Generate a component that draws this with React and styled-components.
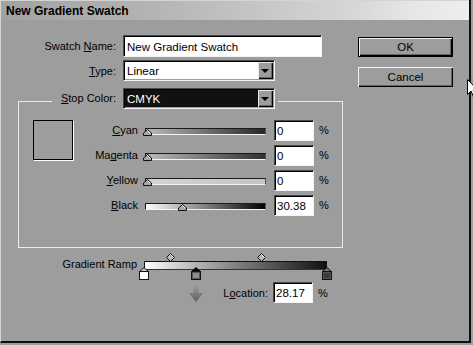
import React from "react";
import styled, { createGlobalStyle } from "styled-components";

const GlobalStyle = createGlobalStyle`
  html, body {
    margin: 0;
    padding: 0;
    background: #9d9d9d;
    overflow: hidden;
  }
  body {
    font-family: "Liberation Sans", Arial, sans-serif;
    font-size: 11px;
    color: #000;
  }
  u {
    text-decoration-skip-ink: none;
  }
`;

const channels = [
  { name: "Cyan", label: <><u>C</u>yan</>, value: "0", pct: 0, from: "#bcbcbc", to: "#262626" },
  { name: "Magenta", label: <>Ma<u>g</u>enta</>, value: "0", pct: 0, from: "#bcbcbc", to: "#303030" },
  { name: "Yellow", label: <><u>Y</u>ellow</>, value: "0", pct: 0, from: "#d4d4d4", to: "#c4c4c4" },
  { name: "Black", label: <><u>B</u>lack</>, value: "30.38", pct: 30.38, from: "#ffffff", to: "#000000" },
];

const stops = [
  { pos: 0, fill: "#ffffff", cap: "#c8c8c8" },
  { pos: 28.17, fill: "#8c8c8c", cap: "#000000" },
  { pos: 100, fill: "#3a3a3a", cap: "#777777" },
];

const RAMP_WIDTH = 183;
const SLIDE_WIDTH = 121;

function App() {
  const selected = stops[1];
  const midpoints = stops.slice(1).map((s, i) => (stops[i].pos + s.pos) / 2);

  return (
    <>
      <GlobalStyle />
      <Screen>
        <Dialog>
          <TitleBar>New Gradient Swatch</TitleBar>
          <Body>
            <Main>
              <FieldRow>
                <Label>Swatch <u>N</u>ame:</Label>
                <TextField readOnly value="New Gradient Swatch" $width={199} $height={22} />
              </FieldRow>
              <FieldRow>
                <Label><u>T</u>ype:</Label>
                <Select>
                  <SelectField>Linear</SelectField>
                  <DropButton />
                </Select>
              </FieldRow>

              <Group>
                <Legend>
                  <LegendLabel><u>S</u>top Color:</LegendLabel>
                  <Select>
                    <SelectField $dark>CMYK</SelectField>
                    <DropButton />
                  </Select>
                </Legend>
                <GroupContent>
                  <Swatch />
                  <SliderGrid>
                    {channels.map((c) => (
                      <React.Fragment key={c.name}>
                        <SliderLabel>{c.label}</SliderLabel>
                        <Track $from={c.from} $to={c.to}>
                          <Thumb style={{ left: `${-3 + (c.pct / 100) * 115}px` }}>
                            <svg width="9" height="7" viewBox="0 0 9 7">
                              <path d="M4.5 0.5 L8.5 4 L8.5 6.5 L0.5 6.5 L0.5 4 Z" fill="#a8a8a8" stroke="#111" />
                              <path d="M4.5 1.5 L7 4" stroke="#fff" />
                            </svg>
                          </Thumb>
                        </Track>
                        <NumField readOnly value={c.value} />
                        <Percent>%</Percent>
                      </React.Fragment>
                    ))}
                  </SliderGrid>
                </GroupContent>
              </Group>

              <RampRow>
                <RampLabel>Gradient Ramp</RampLabel>
                <Ramp>
                  {midpoints.map((m) => (
                    <Diamond key={m} style={{ left: `calc(${m}% - 4px)` }}>
                      <svg width="9" height="9" viewBox="0 0 9 9">
                        <path d="M4.5 0.5 L8.5 4.5 L4.5 8.5 L0.5 4.5 Z" fill="#b8b8b8" stroke="#111" />
                        <path d="M4.5 1.5 L7.5 4.5" stroke="#fff" />
                      </svg>
                    </Diamond>
                  ))}
                  <RampBar />
                  {stops.map((s) => (
                    <Stop key={s.pos} style={{ left: `calc(${s.pos}% - 5px)` }}>
                      <svg width="10" height="13" viewBox="0 0 10 13">
                        <path d="M5 0.5 L9.5 4.5 L0.5 4.5 Z" fill={s.cap} stroke="#111" />
                        <rect x="0.5" y="4.5" width="9" height="8" fill={s.fill} stroke="#111" />
                        <rect x="1.5" y="5.5" width="7" height="6" fill="none" stroke={s.pos === 0 ? "#fff" : "#555"} />
                      </svg>
                    </Stop>
                  ))}
                </Ramp>
              </RampRow>

              <LocationRow>
                <ArrowSlot>
                  <DownArrow
                    style={{ marginLeft: `${(selected.pos / 100) * RAMP_WIDTH - 7}px` }}
                    width="14"
                    height="16"
                    viewBox="0 0 14 16"
                  >
                    <defs>
                      <linearGradient id="arrowFade" x1="0" y1="0" x2="0" y2="1">
                        <stop offset="0" stopColor="#9a9a9a" />
                        <stop offset="1" stopColor="#5e5e5e" />
                      </linearGradient>
                    </defs>
                    <path d="M4.5 0 L9.5 0 L9.5 7 L14 7 L7 16 L0 7 L4.5 7 Z" fill="url(#arrowFade)" />
                  </DownArrow>
                  <LocationLabel>L<u>o</u>cation:</LocationLabel>
                </ArrowSlot>
                <NumField readOnly value="28.17" />
                <Percent>%</Percent>
              </LocationRow>
            </Main>

            <Buttons>
              <Button $primary>OK</Button>
              <Button>Cancel</Button>
            </Buttons>
          </Body>
        </Dialog>

        <Cursor width="12" height="19" viewBox="0 0 12 19">
          <path d="M0.5 0.5 L0.5 15.5 L4 12 L6.5 18 L8.5 17.2 L6 11.3 L11 11.3 Z" fill="#fff" stroke="#000" />
        </Cursor>
      </Screen>
    </>
  );
}

export default App;

const Screen = styled.div`
  position: relative;
  width: 473px;
  height: 345px;
  overflow: hidden;
`;

const Dialog = styled.div`
  width: 471px;
  height: 343px;
  box-sizing: border-box;
  background: #9d9d9d;
  border-left: 1px solid #d6d6d6;
  border-right: 2px solid #111;
  border-bottom: 2px solid #111;
  display: flex;
  flex-direction: column;
`;

const TitleBar = styled.div`
  height: 20px;
  flex: 0 0 20px;
  display: flex;
  align-items: center;
  padding-left: 5px;
  font-size: 12px;
  font-weight: bold;
  border-top: 1px solid #d4d4d4;
  box-sizing: border-box;
  background: linear-gradient(
    to right,
    #a2a2a2 0%,
    #b2b2b2 30%,
    #c6c6c6 55%,
    #d6d6d6 75%,
    #e6e6e6 88%,
    #eeeeee 100%
  );
`;

const Body = styled.div`
  display: flex;
  padding-top: 15px;
`;

const Main = styled.div`
  width: 357px;
  display: flex;
  flex-direction: column;
`;

const FieldRow = styled.div`
  display: grid;
  grid-template-columns: 115px auto;
  column-gap: 7px;
  align-items: center;
  margin-bottom: 3px;
`;

const Label = styled.label`
  text-align: right;
  white-space: nowrap;
`;

const sunken = `
  box-sizing: border-box;
  border: 1px solid;
  border-color: #4a4a4a #f4f4f4 #f4f4f4 #4a4a4a;
  box-shadow: inset 1px 1px 0 #000;
`;

const TextField = styled.input`
  ${sunken}
  width: ${(p) => p.$width}px;
  height: ${(p) => p.$height}px;
  background: #fff;
  font: inherit;
  font-size: 11.5px;
  padding: 1px 0 0 3px;
  outline: none;
`;

const NumField = styled.input`
  ${sunken}
  width: 40px;
  height: 21px;
  background: #fff;
  font: inherit;
  font-size: 11.5px;
  padding: 1px 0 0 2px;
  outline: none;
`;

const Select = styled.div`
  ${sunken}
  width: 152px;
  height: 21px;
  display: flex;
  padding: 1px 1px 1px 1px;
`;

const SelectField = styled.div`
  flex: 1;
  display: flex;
  align-items: center;
  padding-left: 2px;
  font-size: 11.5px;
  background: ${(p) => (p.$dark ? "#111" : "#fff")};
  color: ${(p) => (p.$dark ? "#fff" : "#000")};
`;

const DropButton = styled.div`
  width: 15px;
  background: #9d9d9d;
  box-shadow: inset 1px 1px 0 #e8e8e8, inset -1px -1px 0 #000, inset -2px -2px 0 #666;
  display: flex;
  align-items: center;
  justify-content: center;

  &::after {
    content: "";
    border-left: 4px solid transparent;
    border-right: 4px solid transparent;
    border-top: 4px solid #000;
    margin-left: -1px;
  }
`;

const Group = styled.fieldset`
  margin: 4px 0 0 17px;
  padding: 0 0 32px 0;
  width: 325px;
  min-inline-size: 0;
  box-sizing: border-box;
  border: 1px solid #ececec;
`;

const Legend = styled.legend`
  margin-left: 33px;
  padding: 0 3px 0 4px;
  height: 26px;
  display: flex;
  align-items: flex-start;
  gap: 7px;
`;

const LegendLabel = styled.span`
  width: 60px;
  text-align: right;
  line-height: 21px;
  white-space: nowrap;
`;

const GroupContent = styled.div`
  display: flex;
  align-items: flex-start;
  margin-top: 6px;
`;

const Swatch = styled.div`
  width: 40px;
  height: 40px;
  box-sizing: border-box;
  margin-left: 14px;
  border: 1px solid #000;
  box-shadow: 1px 1px 0 #fff;
  background: #9d9d9d;
`;

const SliderGrid = styled.div`
  display: grid;
  grid-template-columns: 71px ${SLIDE_WIDTH}px 48px auto;
  grid-auto-rows: 20px;
  row-gap: 5px;
  align-items: center;
  margin-left: 1px;

  & > input {
    margin-left: 8px;
  }
`;

const SliderLabel = styled.span`
  text-align: right;
  padding-right: 7px;
  white-space: nowrap;
`;

const Track = styled.div`
  position: relative;
  height: 7px;
  margin-top: 2px;
  box-sizing: border-box;
  border-top: 1px solid #1a1a1a;
  border-left: 1px solid #1a1a1a;
  border-bottom: 1px solid #f4f4f4;
  border-right: 1px solid #555;
  background: linear-gradient(to right, ${(p) => p.$from}, ${(p) => p.$to});
`;

const Thumb = styled.div`
  position: absolute;
  bottom: -2px;
  width: 9px;
  height: 7px;
  line-height: 0;
`;

const Percent = styled.span`
  padding-left: 5px;
`;

const RampRow = styled.div`
  display: grid;
  grid-template-columns: 143px ${RAMP_WIDTH}px;
  align-items: start;
  margin-top: 5px;
`;

const RampLabel = styled.span`
  text-align: right;
  padding-right: 7px;
  padding-top: 4px;
  line-height: 14px;
  white-space: nowrap;
`;

const Ramp = styled.div`
  position: relative;
  height: 28px;
  padding-top: 8px;
  box-sizing: border-box;
`;

const RampBar = styled.div`
  height: 9px;
  box-sizing: border-box;
  border: 1px solid #111;
  border-bottom-color: #333;
  background: linear-gradient(to right, #ffffff 0%, #b4b4b4 28.17%, #101010 100%);
`;

const Diamond = styled.div`
  position: absolute;
  top: 0;
  line-height: 0;
`;

const Stop = styled.div`
  position: absolute;
  top: 14px;
  line-height: 0;
`;

const LocationRow = styled.div`
  display: flex;
  align-items: center;
  margin: 1px 0 0 143px;
`;

const ArrowSlot = styled.div`
  width: 129px;
  display: flex;
  align-items: center;
`;

const DownArrow = styled.svg`
  flex: none;
  margin-top: 3px;
`;

const LocationLabel = styled.span`
  margin-left: auto;
  padding-right: 5px;
`;

const Buttons = styled.div`
  display: flex;
  flex-direction: column;
  gap: 10px;
  padding-top: 2px;
`;

const Button = styled.div`
  width: 95px;
  height: 20px;
  box-sizing: border-box;
  display: flex;
  align-items: center;
  justify-content: center;
  font-size: 11.5px;
  background: #9d9d9d;
  border: ${(p) => (p.$primary ? "1px solid #000" : "none")};
  box-shadow: inset 1px 1px 0 #f0f0f0, inset -1px -1px 0 #000, inset -2px -2px 0 #666;
`;

const Cursor = styled.svg`
  position: absolute;
  left: 467px;
  top: 79px;
`;
